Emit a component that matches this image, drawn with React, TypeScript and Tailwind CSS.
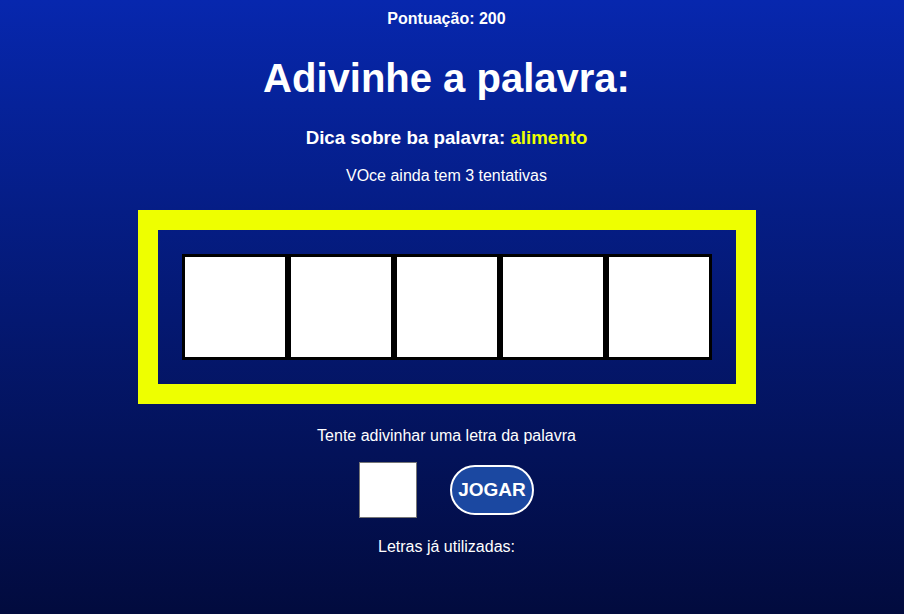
import React from "react";

export default function App() {
  const cells = [0, 1, 2, 3, 4];
  return (
    <div
      className="w-full h-[614px] pr-[11px] bg-linear-to-b from-[#0727ae] to-[#020b3e] text-white flex flex-col items-center overflow-hidden"
      style={{ fontFamily: '"Liberation Sans", Arial, sans-serif' }}
    >
      <p className="mt-[10px] text-[16px] leading-[18px] font-bold">Pontuação: 200</p>
      <h1 className="mt-[27px] text-[40px] leading-[46px] font-bold">Adivinhe a palavra:</h1>
      <h3 className="mt-[26px] text-[18.72px] leading-[22px] font-bold">
        Dica sobre ba palavra: <span className="text-[#eeff00]">alimento</span>
      </h3>
      <p className="mt-[18px] text-[16px] leading-[18px]">VOce ainda tem 3 tentativas</p>
      <div className="mt-[25px] w-[618px] border-[20px] border-[#eeff00] p-[24px] flex">
        {cells.map((i) => (
          <div key={i} className="w-[106px] h-[106px] border-[3px] border-black bg-white" />
        ))}
      </div>
      <p className="mt-[23px] text-[16px] leading-[18px]">Tente adivinhar uma letra da palavra</p>
      <div className="mt-[17px] flex items-center gap-[33px]">
        <input
          type="text"
          maxLength={1}
          className="w-[58px] h-[56px] bg-white border border-[#767676] outline-none"
        />
        <button className="w-[84px] h-[50px] rounded-full bg-[#1b48a1] border-2 border-white text-white text-[19px] font-bold leading-[22px]">
          JOGAR
        </button>
      </div>
      <p className="mt-[20px] text-[16px] leading-[18px]">Letras já utilizadas:</p>
    </div>
  );
}
